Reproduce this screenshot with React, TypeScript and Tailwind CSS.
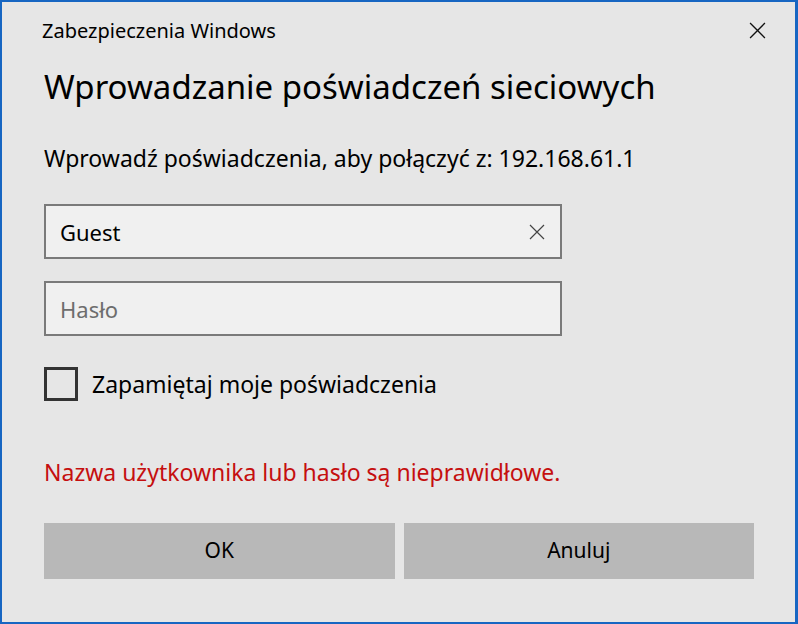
import React from 'react';

const font = { fontFamily: '"Noto Sans", "Open Sans", sans-serif' };

function CloseIcon({ size, stroke }: { size: number; stroke: string }) {
    return (
        <svg width={size} height={size} viewBox="0 0 16 16" fill="none">
            <path d="M1 1L15 15M15 1L1 15" stroke={stroke} strokeWidth="1.2" />
        </svg>
    );
}

export default function App() {
    return (
        <div
            style={font}
            className="w-[798px] h-[624px] bg-[#e6e6e6] border-2 border-r-[3px] border-[#1766c2] flex flex-col text-black"
        >
            {/* Header */}
            <div className="flex items-start justify-between pl-[40px] pr-[29px] pt-[16px] h-[44px]">
                <span className="text-[20px] leading-[26px]">Zabezpieczenia Windows</span>
                <div className="mt-[4px]">
                    <CloseIcon size={17} stroke="#111" />
                </div>
            </div>

            <div className="pl-[42px] pr-[41px] flex flex-col">
                <h1 className="text-[33px] leading-[40px] mt-[21px]">Wprowadzanie poświadczeń sieciowych</h1>

                <p className="text-[23px] leading-[30px] mt-[36px]">
                    Wprowadź poświadczenia, aby połączyć z: 192.168.61.1
                </p>

                {/* Inputs */}
                <div className="mt-[31px] w-[518px] h-[55px] bg-[#f0f0f0] border-2 border-[#7a7a7a] flex items-center justify-between pl-[14px] pr-[15px]">
                    <span className="text-[22px] leading-[30px]">Guest</span>
                    <CloseIcon size={16} stroke="#444" />
                </div>
                <div className="mt-[22px] w-[518px] h-[55px] bg-[#f0f0f0] border-2 border-[#7a7a7a] flex items-center pl-[14px]">
                    <span className="text-[22px] leading-[30px] text-[#6d6d6d]">Hasło</span>
                </div>

                {/* Checkbox */}
                <div className="mt-[31px] h-[34px] flex items-center gap-[14px]">
                    <div className="w-[34px] h-[34px] border-[3px] border-[#333333]" />
                    <span className="text-[23px] leading-[30px]">Zapamiętaj moje poświadczenia</span>
                </div>

                <p className="mt-[56px] text-[23px] leading-[30px] text-[#c50f0f]">
                    Nazwa użytkownika lub hasło są nieprawidłowe.
                </p>

                {/* Buttons */}
                <div className="mt-[36px] flex gap-[9px]">
                    <button className="w-[351px] h-[56px] bg-[#b8b8b8] text-[21px]">OK</button>
                    <button className="w-[351px] h-[56px] bg-[#b8b8b8] text-[21px]">Anuluj</button>
                </div>
            </div>
        </div>
    );
}
